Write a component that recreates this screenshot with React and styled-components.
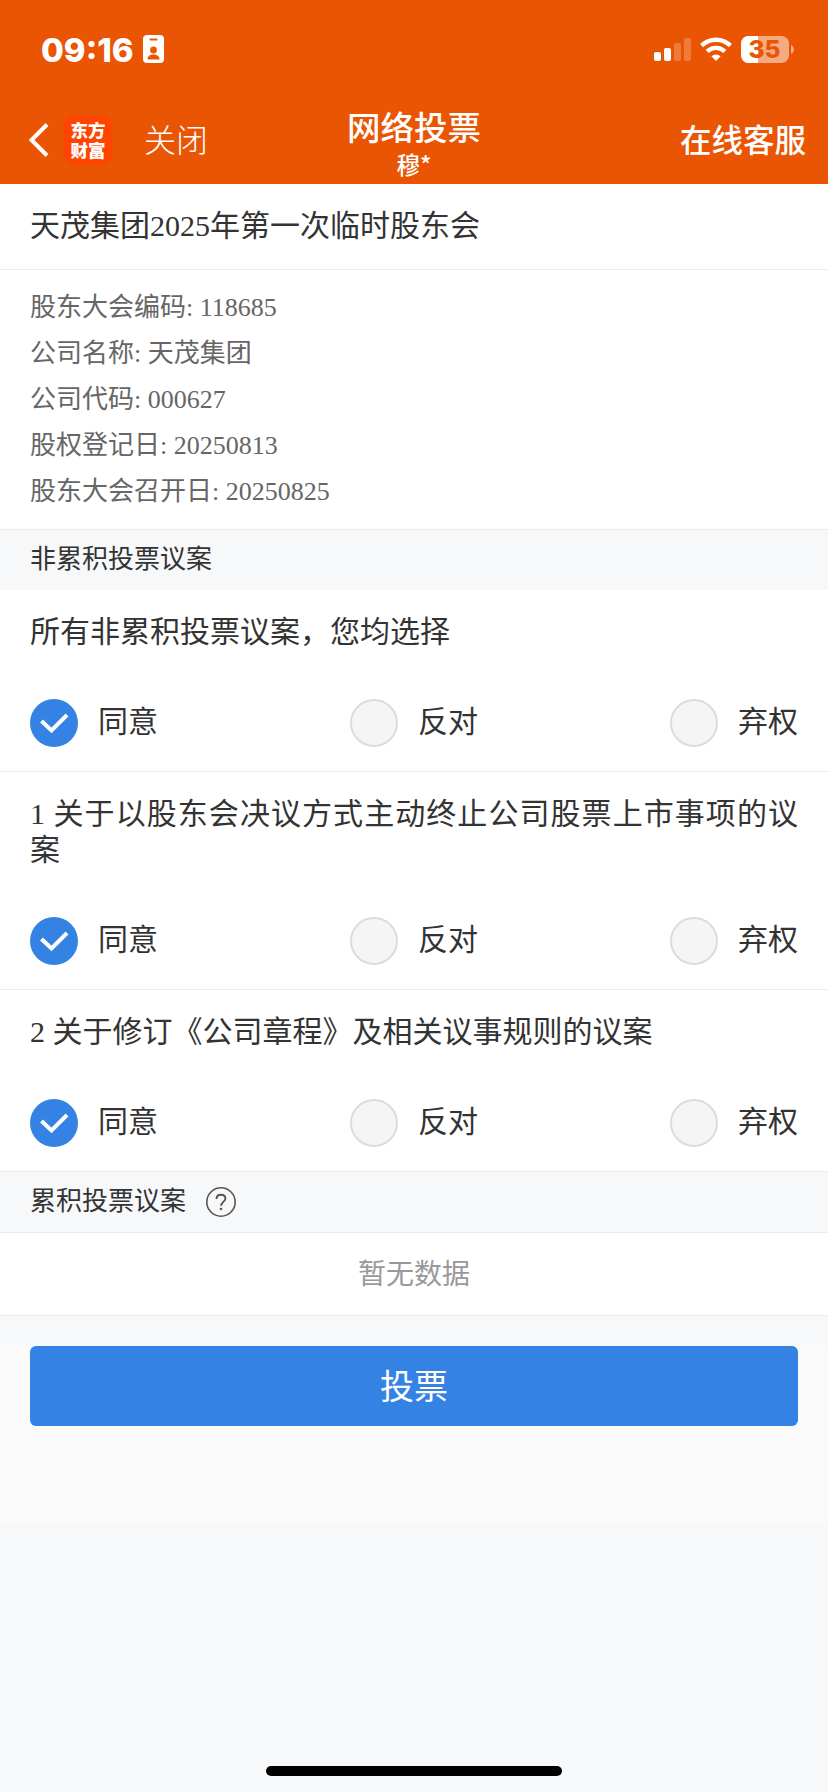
import React, { useState } from "react";
import styled, { createGlobalStyle } from "styled-components";

const GlobalStyle = createGlobalStyle`
  * {
    box-sizing: border-box;
  }

  body {
    margin: 0;
    background: #f7f8fa;
    font-family: "Liberation Serif", "Noto Sans CJK SC", serif;
    color: #333;
  }
`;

const Page = styled.div`
  display: flex;
  flex-direction: column;
  min-height: 1792px;
`;

const Header = styled.header`
  height: 184px;
  background: #ea5504;
  color: #fff;
  font-family: "Noto Sans CJK SC", sans-serif;
`;

const StatusBar = styled.div`
  display: flex;
  align-items: center;
  height: 98px;
  padding: 0 34px 0 41px;
`;

const Time = styled.span`
  width: 102px;
  padding-top: 1px;
  font: 800 33px/40px Inter, sans-serif;
  white-space: nowrap;
`;

const StatusIcons = styled.div`
  display: flex;
  align-items: center;
  gap: 9px;
  margin-left: auto;
`;

const NavBar = styled.div`
  display: grid;
  grid-template-columns: minmax(0, 1fr) auto minmax(0, 1fr);
  height: 86px;
  padding: 0 22px;
`;

const NavLeft = styled.div`
  display: flex;
  align-items: center;
  height: 84px;
  padding-left: 6px;
`;

const Logo = styled.div`
  width: 48px;
  height: 48px;
  margin: 0 32px 0 14px;
  padding-top: 4px;
  border-radius: 9px;
  background: #ff4400;
  font-size: 17.5px;
  font-weight: 900;
  line-height: 20px;
  text-align: center;
`;

const NavLink = styled.span`
  font-size: ${(p) => (p.$strong ? 31.5 : 32)}px;
  font-weight: ${(p) => (p.$strong ? 500 : 300)};
  line-height: 48px;
  padding-bottom: 4px;
`;

const NavTitle = styled.div`
  padding-top: 5px;
  text-align: center;
`;

const TitleText = styled.div`
  font-size: 33.5px;
  font-weight: 500;
  line-height: 46px;
`;

const UserName = styled.div`
  font-size: 23.5px;
  font-weight: 500;
  line-height: 30px;
`;

const NavRight = styled(NavLeft)`
  justify-content: flex-end;
  padding-left: 0;
`;

const MeetingTitle = styled.h1`
  margin: 0;
  height: 86px;
  padding: 0 30px;
  border-bottom: 1px solid #ebebeb;
  background: #fff;
  font-size: 30px;
  font-weight: 400;
  line-height: 84px;
`;

const Info = styled.div`
  height: 260px;
  padding: 15px 30px 0;
  border-bottom: 1px solid #ebebeb;
  background: #fff;
  color: #666;
  font-size: 26px;
  line-height: 46px;
`;

const SectionTitle = styled.div`
  display: flex;
  align-items: center;
  gap: 20px;
  height: ${(p) => (p.$bordered ? 61 : 60)}px;
  padding: 0 30px;
  border-bottom: ${(p) => (p.$bordered ? "1px solid #ebebeb" : "0")};
  font-size: 26px;
  line-height: 58px;
`;

const Proposal = styled.div`
  padding: 24px 30px;
  border-bottom: 1px solid #ebebeb;
  background: #fff;
  font-size: 30px;
`;

const ProposalTitle = styled.div`
  margin-bottom: 49px;
  line-height: 36px;
  text-align: justify;
`;

const Options = styled.div`
  display: flex;
  justify-content: space-between;
`;

const Option = styled.div`
  display: flex;
  align-items: center;
  gap: 20px;
  height: 48px;
  line-height: 46px;
  cursor: pointer;
`;

const Radio = styled.span`
  display: flex;
  width: 48px;
  height: 48px;
  border: ${(p) => (p.$checked ? "0" : "2px solid #dcdcdc")};
  border-radius: 50%;
  background: ${(p) => (p.$checked ? "#3482e4" : "#f5f5f5")};
`;

const OptionLabel = styled.span`
  height: 48px;
`;

const Empty = styled.div`
  height: 83px;
  border-bottom: 1px solid #ebebeb;
  background: #fff;
  color: #999;
  font-size: 28px;
  line-height: 84px;
  text-align: center;
`;

const Footer = styled.div`
  height: 177px;
  margin-top: 30px;
  padding: 0 30px;
  background: #fafafa;
`;

const SubmitButton = styled.button`
  display: block;
  width: 100%;
  height: 80px;
  padding: 0 0 2px;
  border: 0;
  border-radius: 6px;
  background: #3482e4;
  color: #fff;
  font-family: "Noto Sans CJK SC", sans-serif;
  font-size: 34px;
  line-height: 78px;
`;

const HomeIndicator = styled.div`
  width: 296px;
  height: 10px;
  margin: auto auto 16px;
  border-radius: 5px;
  background: #000;
`;

const info = [
  ["股东大会编码", "118685"],
  ["公司名称", "天茂集团"],
  ["公司代码", "000627"],
  ["股权登记日", "20250813"],
  ["股东大会召开日", "20250825"],
];

const proposals = [
  "所有非累积投票议案，您均选择",
  "1 关于以股东会决议方式主动终止公司股票上市事项的议案",
  "2 关于修订《公司章程》及相关议事规则的议案",
];

const choices = ["同意", "反对", "弃权"];

function BadgeIcon() {
  return (
    <svg width="21" height="28" viewBox="0 0 21 28">
      <rect width="21" height="28" rx="4" fill="#fff" />
      <rect x="6.5" y="3.5" width="8" height="2" rx="1" fill="#ea5504" />
      <ellipse cx="10.5" cy="15" rx="3.4" ry="3.5" fill="#ea5504" />
      <path d="M4.5 24.5c0-3.500 2.500-5 6-5s6 1.500 6 5z" fill="#ea5504" />
    </svg>
  );
}

function SignalIcon() {
  return (
    <svg width="37" height="24" viewBox="0 0 37 24" fill="#fff">
      <rect x="0" y="15" width="7" height="9" rx="2" />
      <rect x="10" y="11" width="7" height="13" rx="2" />
      <rect x="20" y="6" width="7" height="18" rx="2" opacity=".22" />
      <rect x="30" y="1" width="7" height="23" rx="2" opacity=".22" />
    </svg>
  );
}

function WifiIcon() {
  return (
    <svg width="32" height="24" viewBox="0 0 32 24">
      <g fill="none" stroke="#fff" strokeWidth="4.400">
        <path d="M1.600 8.600a20.500 20.500 0 0 1 28.800 0" />
        <path d="M7.200 14.500a12.500 12.500 0 0 1 17.600 0" />
      </g>
      <path d="M16 24l-4.600-4.800a7 7 0 0 1 9.200 0z" fill="#fff" />
    </svg>
  );
}

function BatteryIcon() {
  return (
    <svg width="53" height="28" viewBox="0 0 53 28">
      <clipPath id="level">
        <rect width="17" height="28" />
      </clipPath>
      <rect y="1" width="48" height="27" rx="7.500" fill="#fff" opacity=".5" />
      <rect y="1" width="48" height="27" rx="7.500" fill="#fff" clipPath="url(#level)" />
      <path d="M50 10c1.700.6 3 2.300 3 4.500s-1.300 3.900-3 4.500z" fill="#fff" opacity=".5" />
      <text
        x="23.500"
        y="23"
        textAnchor="middle"
        fill="#ea5504"
        fontFamily="Inter, sans-serif"
        fontSize="24.5"
        fontWeight="800"
      >
        35
      </text>
    </svg>
  );
}

function BackIcon() {
  return (
    <svg width="22" height="36" viewBox="0 0 22 36">
      <path d="M19 2.500L3.500 18l15.500 15.500" fill="none" stroke="#fff" strokeWidth="4" />
    </svg>
  );
}

function CheckIcon() {
  return (
    <svg width="48" height="48" viewBox="0 0 48 48">
      <path d="M11.500 22l10 9.500 15.500-15.500" fill="none" stroke="#fff" strokeWidth="4" />
    </svg>
  );
}

function HelpIcon() {
  return (
    <svg width="30" height="30" viewBox="0 0 30 30">
      <circle cx="15" cy="15" r="14.200" fill="none" stroke="#555" strokeWidth="1.600" />
      <path
        d="M10.500 12c0-2.800 1.900-4.300 4.500-4.300s4.400 1.500 4.400 3.800c0 3.200-4.300 3.600-4.300 7.300"
        fill="none"
        stroke="#555"
        strokeWidth="1.900"
      />
      <circle cx="15" cy="22" r="1.300" fill="#555" />
    </svg>
  );
}

function ProposalItem({ title }) {
  const [selected, setSelected] = useState(0);

  return (
    <Proposal>
      <ProposalTitle>{title}</ProposalTitle>
      <Options>
        {choices.map((choice, i) => (
          <Option key={choice} onClick={() => setSelected(i)}>
            <Radio $checked={selected === i}>{selected === i && <CheckIcon />}</Radio>
            <OptionLabel>{choice}</OptionLabel>
          </Option>
        ))}
      </Options>
    </Proposal>
  );
}

export default function App() {
  return (
    <Page>
      <GlobalStyle />
      <Header>
        <StatusBar>
          <Time>09:16</Time>
          <BadgeIcon />
          <StatusIcons>
            <SignalIcon />
            <WifiIcon />
            <BatteryIcon />
          </StatusIcons>
        </StatusBar>
        <NavBar>
          <NavLeft>
            <BackIcon />
            <Logo>
              东方
              <br />
              财富
            </Logo>
            <NavLink>关闭</NavLink>
          </NavLeft>
          <NavTitle>
            <TitleText>网络投票</TitleText>
            <UserName>穆*</UserName>
          </NavTitle>
          <NavRight>
            <NavLink $strong>在线客服</NavLink>
          </NavRight>
        </NavBar>
      </Header>

      <MeetingTitle>天茂集团2025年第一次临时股东会</MeetingTitle>
      <Info>
        {info.map(([label, value]) => (
          <div key={label}>
            {label}: {value}
          </div>
        ))}
      </Info>

      <SectionTitle>非累积投票议案</SectionTitle>
      {proposals.map((title) => (
        <ProposalItem key={title} title={title} />
      ))}

      <SectionTitle $bordered>
        累积投票议案
        <HelpIcon />
      </SectionTitle>
      <Empty>暂无数据</Empty>

      <Footer>
        <SubmitButton>投票</SubmitButton>
      </Footer>
      <HomeIndicator />
    </Page>
  );
}
